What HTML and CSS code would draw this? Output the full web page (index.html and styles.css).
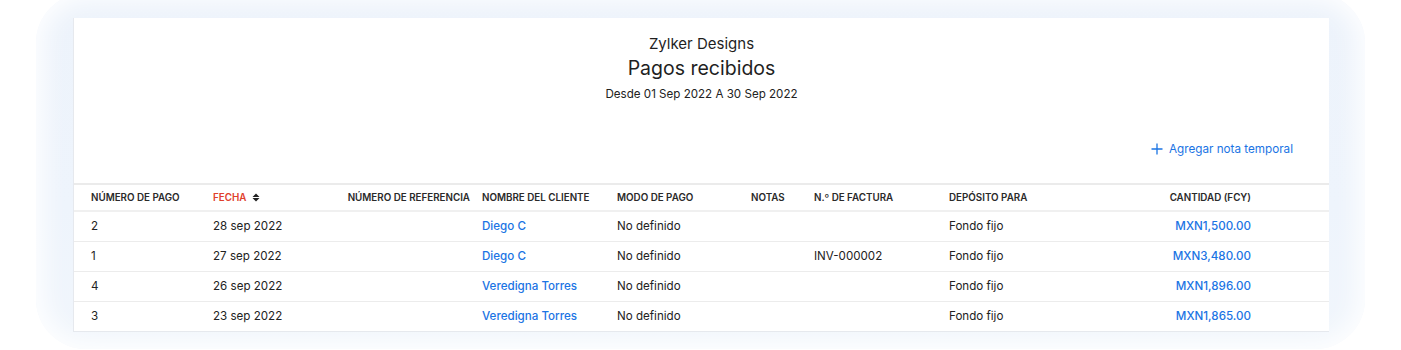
FILE: index.html
```html
<!DOCTYPE html>
<html lang="es">
<head>
<meta charset="utf-8">
<title>Pagos recibidos</title>
<link rel="stylesheet" href="styles.css">
</head>
<body>
<div class="frame">
  <div class="card">
    <header class="report-head">
      <div class="org">Zylker Designs</div>
      <h1 class="title">Pagos recibidos</h1>
      <div class="range">Desde 01 Sep 2022 A 30 Sep 2022</div>
    </header>
    <div class="actions">
      <a class="add-note" href="#">
        <svg class="plus" width="12" height="12" viewBox="0 0 12 12"><path d="M6 0.5V11.5M0.5 6H11.5" stroke="currentColor" stroke-width="1.3" fill="none"/></svg>
        Agregar nota temporal
      </a>
    </div>
    <table class="report">
      <colgroup>
        <col class="c1"><col class="c2"><col class="c3"><col class="c4"><col class="c5"><col class="c6"><col class="c7"><col class="c8"><col class="c9"><col class="c10">
      </colgroup>
      <thead>
        <tr>
          <th class="first">NÚMERO DE PAGO</th>
          <th class="sorted">FECHA <span class="sort"><svg width="8" height="9" viewBox="0 0 8 9"><path d="M4 0.5L7.5 4H0.5Z M0.5 5H7.5L4 8.5Z" fill="#222"/></svg></span></th>
          <th class="right">NÚMERO DE REFERENCIA</th>
          <th>NOMBRE DEL CLIENTE</th>
          <th>MODO DE PAGO</th>
          <th>NOTAS</th>
          <th>N.º DE FACTURA</th>
          <th>DEPÓSITO PARA</th>
          <th class="right">CANTIDAD (FCY)</th>
          <th></th>
        </tr>
      </thead>
      <tbody>
        <tr>
          <td class="first">2</td><td>28 sep 2022</td><td class="right"></td><td><a class="link" href="#">Diego C</a></td><td>No definido</td><td></td><td></td><td>Fondo fijo</td><td class="right"><a class="link" href="#">MXN1,500.00</a></td><td></td>
        </tr>
        <tr>
          <td class="first">1</td><td>27 sep 2022</td><td class="right"></td><td><a class="link" href="#">Diego C</a></td><td>No definido</td><td></td><td>INV-000002</td><td>Fondo fijo</td><td class="right"><a class="link" href="#">MXN3,480.00</a></td><td></td>
        </tr>
        <tr>
          <td class="first">4</td><td>26 sep 2022</td><td class="right"></td><td><a class="link" href="#">Veredigna Torres</a></td><td>No definido</td><td></td><td></td><td>Fondo fijo</td><td class="right"><a class="link" href="#">MXN1,896.00</a></td><td></td>
        </tr>
        <tr class="last">
          <td class="first">3</td><td>23 sep 2022</td><td class="right"></td><td><a class="link" href="#">Veredigna Torres</a></td><td>No definido</td><td></td><td></td><td>Fondo fijo</td><td class="right"><a class="link" href="#">MXN1,865.00</a></td><td></td>
        </tr>
      </tbody>
    </table>
  </div>
</div>
</body>
</html>
```
FILE: styles.css
```css
* { box-sizing: border-box; }
html, body { margin: 0; padding: 0; background: #ffffff; overflow: hidden; }
body {
  font-family: Inter, "Noto Sans", "Liberation Sans", sans-serif;
  color: #222;
  height: 350px;
}
.frame {
  margin: -7px 0 0 36px;
  width: 1329px;
  height: 356px;
  border-radius: 50px;
  background: linear-gradient(180deg, #edf3fb 0%, #eef4fc 60%, #f1f6fc 100%);
  box-shadow: inset 0 0 24px 8px rgba(255,255,255,0.9);
  padding: 25px 0 0 37px;
}
.card {
  width: 1256px;
  height: 314px;
  background: #fff;
  border: 1px solid #e6e9ee;
  border-top: none;
  border-right: none;
  display: flex;
  flex-direction: column;
}
.report-head {
  display: flex;
  flex-direction: column;
  align-items: center;
  padding-top: 17px;
}
.org { font-size: 15px; line-height: 18px; color: #1f1f1f; }
.title { margin: 3px 0 0; font-size: 19.5px; font-weight: 400; line-height: 24px; color: #1f1f1f; }
.range { margin-top: 7px; font-size: 11.6px; line-height: 14px; color: #222; }
.actions {
  display: flex;
  justify-content: flex-end;
  padding: 40px 36px 0 0;
  height: 82px;
}
.add-note {
  display: flex;
  align-items: center;
  gap: 6px;
  height: 16px;
  font-size: 11.7px;
  color: #1b74e4;
  text-decoration: none;
}
.plus { display: block; }
.report {
  border-collapse: collapse;
  table-layout: fixed;
  width: 1255px;
}
.c1 { width: 139px; }
.c2 { width: 122px; }
.c3 { width: 147px; }
.c4 { width: 135px; }
.c5 { width: 134px; }
.c6 { width: 63px; }
.c7 { width: 135px; }
.c8 { width: 191px; }
.c9 { width: 123px; }
.c10 { width: 66px; }
th, td {
  text-align: left;
  padding: 0 12px 0 0;
  white-space: nowrap;
}
th {
  height: 27px;
  font-size: 9.8px;
  font-weight: 600;
  color: #2a2a2a;
  border-top: 2px solid #ebebeb;
  border-bottom: 2px solid #f0f0f0;
}
td {
  height: 30px;
  font-size: 11.6px;
  color: #222;
  border-bottom: 1px solid #ececec;
}
tr.last td { border-bottom: none; }
.first { padding-left: 17px; }
.right { text-align: right; }
.sorted { color: #e0402c; }
.sort { display: inline-block; margin-left: 3px; vertical-align: -1px; }
.sort svg { display: block; }
.link { color: #1b74e4; text-decoration: none; font-weight: 500; }
```
